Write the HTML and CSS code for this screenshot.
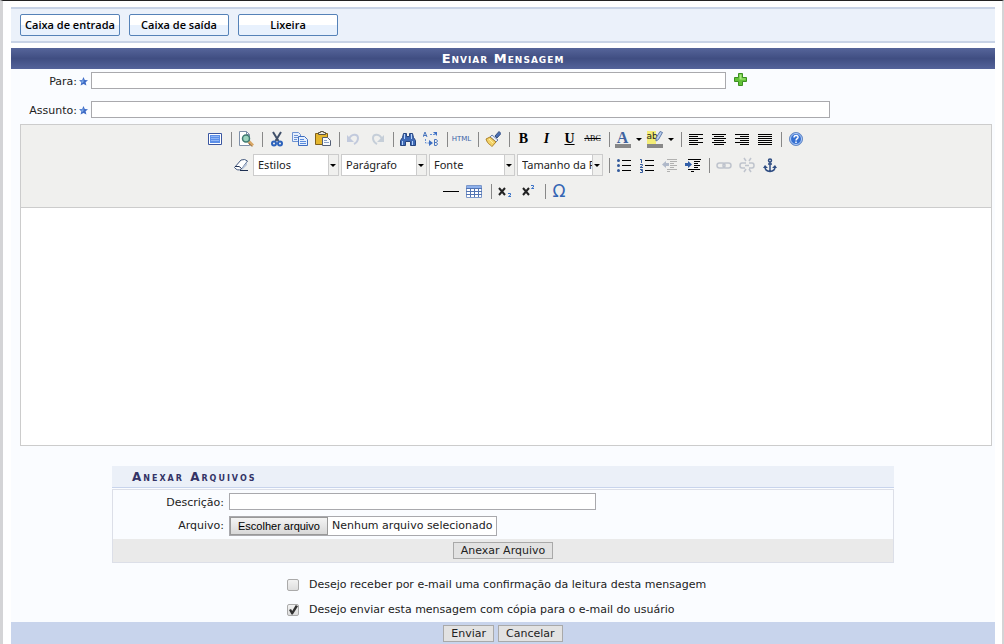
FILE: index.html
```html
<!DOCTYPE html>
<html lang="pt-BR">
<head>
<meta charset="utf-8">
<meta name="viewport" content="width=device-width, initial-scale=1">
<title>Enviar Mensagem</title>
<link rel="stylesheet" href="styles.css">
</head>
<body>
<main class="page">
  <nav class="mailbar">
    <button type="button" class="mailbar-btn">Caixa de entrada</button>
    <button type="button" class="mailbar-btn">Caixa de saída</button>
    <button type="button" class="mailbar-btn">Lixeira</button>
  </nav>

  <form class="message">
    <h1 class="caption">Enviar Mensagem</h1>
    <div class="body">
      <div class="row">
        <label class="label" for="para">Para:</label>
        <svg class="star" viewBox="0 0 9 9"><path fill="#3f6cc6" d="M4.500 0l1.300 3 3.200.2-2.400 2.100.8 3.300-2.900-1.600-2.900 1.600.8-3.300L0 3.200 3.200 3z"/><path fill="#7dabea" d="M4.500 2v3L2.500 6.500 3 5 1.500 3.700l2-.2z"/></svg>
        <div class="fieldarea">
          <input class="text para" id="para" type="text">
          <button type="button" class="add" aria-label="Adicionar"><svg width="13" height="13" viewBox="0 0 13 13"><path d="M4.500.500h4v4h4v4h-4v4h-4v-4h-4v-4h4z" fill="#63c238" stroke="#3c8f22"/><path d="M5.500 1.500h2v4h4v1h-6v-1h-4h4z" fill="#a9ea80"/></svg></button>
        </div>
      </div>
      <div class="row">
        <label class="label" for="assunto">Assunto:</label>
        <svg class="star" viewBox="0 0 9 9"><path fill="#3f6cc6" d="M4.500 0l1.300 3 3.200.2-2.400 2.100.8 3.300-2.900-1.600-2.900 1.600.8-3.300L0 3.200 3.200 3z"/><path fill="#7dabea" d="M4.500 2v3L2.500 6.500 3 5 1.500 3.700l2-.2z"/></svg>
        <div class="fieldarea"><input class="text assunto" id="assunto" type="text"></div>
      </div>

      <div class="editor">
        <div class="tools">
          <div class="toolrow">
            <button type="button" class="tool" aria-label="Tela cheia"><svg viewBox="0 0 16 16"><path fill="#fff" stroke="#3a56a0" d="M1.500 2.500h13v11h-13z"/><path fill="#5c8fe8" d="M3 4h10v8H3z"/><path stroke="#8fb5f5" d="M4 5.500h8M4 7.500h8M4 9.500h8"/></svg></button>
            <i class="sep"></i>
            <button type="button" class="tool" aria-label="Visualizar"><svg viewBox="0 0 16 16"><path fill="#fff" stroke="#7d8fa8" d="M1.500.500h7l3 3v11h-10z"/><path fill="none" stroke="#7d8fa8" d="M8.500.500v3h3"/><path stroke="#d9a765" stroke-width="3" d="M11 10.500l4 4"/><path stroke="#79542a" d="M10 11.500l4 4"/><circle cx="8" cy="7.500" r="3.500" fill="#9bd4bd" stroke="#3f7970" stroke-width="1.500"/></svg></button>
            <i class="sep"></i>
            <button type="button" class="tool" aria-label="Recortar"><svg viewBox="0 0 16 16"><path fill="none" stroke="#40506a" stroke-width="2" d="M4 1l5.500 9M12 1L6.500 10"/><circle cx="5" cy="12.500" r="2" fill="none" stroke="#2c62bc" stroke-width="2"/><circle cx="11" cy="12.500" r="2" fill="none" stroke="#2c62bc" stroke-width="2"/></svg></button>
            <button type="button" class="tool" aria-label="Copiar"><svg viewBox="0 0 16 16"><path fill="#e5effd" stroke="#6d92d2" d="M.500 1.500h6l2 2v7h-8z"/><path stroke="#6d92d2" d="M2 4.500h4M2 6.500h4M2 8.500h3"/><path fill="#e5effd" stroke="#3d6dc0" d="M6.500 5.500h6l3 3v6h-9z"/><path stroke="#5a8bdc" d="M8 8.500h4M8 10.500h6M8 12.500h6"/></svg></button>
            <button type="button" class="tool" aria-label="Colar"><svg viewBox="0 0 16 16"><path fill="#e4b62e" stroke="#80601a" d="M.500 2.500h12v11H.500z"/><path fill="#e8e6df" stroke="#59523f" d="M3.500 3.500v-2h2v-1h3v1h2v2z"/><path fill="#f7fbff" stroke="#545f75" d="M7.500 6.500h5l3 3v5h-8z"/><path stroke="#899fc5" d="M9 9.500h3M9 11.500h5"/></svg></button>
            <i class="sep"></i>
            <button type="button" class="tool off" aria-label="Desfazer"><svg viewBox="0 0 16 16"><path fill="none" stroke="#a5b2d2" stroke-width="2" d="M3 8c2-5 9-6 9-1 0 3-2 5-4 6"/><path fill="#a5b2d2" d="M1 4v7h7z"/></svg></button>
            <button type="button" class="tool off" aria-label="Refazer"><svg viewBox="0 0 16 16"><path fill="none" stroke="#a9b8cb" stroke-width="2" d="M13 8c-2-5-9-6-9-1 0 3 2 5 4 6"/><path fill="#a9b8cb" d="M15 4v7H8z"/></svg></button>
            <i class="sep"></i>
            <button type="button" class="tool" aria-label="Localizar"><svg viewBox="0 0 16 16"><path fill="#3f69b5" stroke="#27457f" d="M3.500 2.500h3v3h3v-3h3l1 4 2 3v5h-5v-4h-5v4h-5v-5l2-3z"/><path stroke="#b5d2fa" d="M4.500 3v5M11.500 3v5M2.500 10v4M12.500 10v4"/></svg></button>
            <button type="button" class="tool" aria-label="Substituir"><svg viewBox="0 0 16 16"><path fill="none" stroke="#4975bd" d="M0 6l2-5 2 5M1 4.500h3M11.500 8.500v6h2q2-1.500 0-3h-2m0-3h2q2 1.500 0 3"/><path fill="none" stroke="#6893d6" stroke-dasharray="2 1" d="M7 3.500h5M2.500 8v4h5"/><path fill="#3c6fc4" d="M10 1h4v4zM6 9l4 3-4 3z"/></svg></button>
            <i class="sep"></i>
            <button type="button" class="tool html" aria-label="Editar HTML">HTML</button>
            <i class="sep"></i>
            <button type="button" class="tool" aria-label="Limpar código"><svg viewBox="0 0 16 16"><path fill="#4a70b4" stroke="#354e80" d="M10 5l4-4.500 2 2L12 7z"/><path fill="#e8edf7" stroke="#6780ae" d="M7 4l6 5-2 2-6-5z"/><path fill="#f3d36a" stroke="#ae8126" d="M5 6l6 5-4 4.500C5 13 3 14 1 8z"/><path stroke="#fff0a6" d="M4 8l4 4"/></svg></button>
            <i class="sep"></i>
            <button type="button" class="tool glyph" aria-label="Negrito"><b>B</b></button>
            <button type="button" class="tool glyph" aria-label="Itálico"><em>I</em></button>
            <button type="button" class="tool glyph" aria-label="Sublinhado"><u>U</u></button>
            <button type="button" class="tool strike" aria-label="Riscado"><s>ABC</s></button>
            <i class="sep"></i>
            <button type="button" class="tool color" aria-label="Cor do texto"><span class="swatch letter">A</span><span class="caret"></span></button>
            <button type="button" class="tool color" aria-label="Cor de fundo"><span class="swatch marker">ab<svg class="pen" viewBox="0 0 8 11"><path fill="#b9cdec" stroke="#5f7aa8" d="M5 .500l2.500 1-4 7L1 10V7z"/></svg></span><span class="caret"></span></button>
            <i class="sep"></i>
            <button type="button" class="tool" aria-label="Alinhar à esquerda"><svg viewBox="0 0 16 16"><path stroke="#000" d="M1 3.500h14M1 5.500h9M1 7.500h14M1 9.500h9M1 11.500h14M1 13.500h9"/></svg></button>
            <button type="button" class="tool" aria-label="Centralizar"><svg viewBox="0 0 16 16"><path stroke="#000" d="M1 3.500h14M3 5.500h10M1 7.500h14M3 9.500h10M1 11.500h14M3 13.500h10"/></svg></button>
            <button type="button" class="tool" aria-label="Alinhar à direita"><svg viewBox="0 0 16 16"><path stroke="#000" d="M1 3.500h14M6 5.500h9M1 7.500h14M6 9.500h9M1 11.500h14M6 13.500h9"/></svg></button>
            <button type="button" class="tool" aria-label="Justificar"><svg viewBox="0 0 16 16"><path stroke="#000" d="M1 3.500h14M1 5.500h14M1 7.500h14M1 9.500h14M1 11.500h14M1 13.500h14"/></svg></button>
            <i class="sep"></i>
            <button type="button" class="tool" aria-label="Ajuda"><svg viewBox="0 0 16 16"><circle cx="8" cy="8" r="6.500" fill="#3570d2" stroke="#6a8cc4"/><circle cx="8" cy="8" r="5.500" fill="none" stroke="#b7d0f6"/><path fill="none" stroke="#fff" stroke-width="1.500" d="M6 6.500c0-3 4.500-2.500 4 0-.3 1.200-2 1.200-2 3M8 10.500v1.500"/></svg></button>
          </div>
          <div class="toolrow">
            <button type="button" class="tool" aria-label="Remover formatação"><svg viewBox="0 0 16 16"><path fill="#fff" stroke="#44597e" d="M1.500 10.500L8 3q4-1.500 6.500 1L8.500 12q-4 2.500-7-1.500z"/><path fill="#b8c5da" d="M9 11l5-6v3l-5 5z"/><path fill="none" stroke="#1d2f51" d="M7 13.500h8M2 9.500q5-1 6.500 2"/></svg></button>
            <span class="combo"><select aria-label="Estilos"><option>Estilos</option></select></span>
            <span class="combo"><select aria-label="Parágrafo"><option>Parágrafo</option></select></span>
            <span class="combo"><select aria-label="Fonte"><option>Fonte</option></select></span>
            <span class="combo"><select aria-label="Tamanho da Fonte"><option>Tamanho da Fonte</option></select></span>
            <i class="sep"></i>
            <button type="button" class="tool" aria-label="Lista"><svg viewBox="0 0 16 16"><path stroke="#000" d="M6 3.500h9M6 8.500h9M6 13.500h9"/><g fill="#335a9c"><circle cx="2.500" cy="3.500" r="1.500"/><circle cx="2.500" cy="8.500" r="1.500"/><circle cx="2.500" cy="13.500" r="1.500"/></g></svg></button>
            <button type="button" class="tool" aria-label="Lista numerada"><svg viewBox="0 0 16 16"><path stroke="#000" d="M6 3.500h9M6 8.500h9M6 13.500h9"/><path fill="none" stroke="#335a9c" d="M1 2.500h1.500V6M1 7.500h2.500v1L1 10.500h3M1 12.500h2.500v1H2h1.500v2H1"/></svg></button>
            <button type="button" class="tool off" aria-label="Diminuir recuo"><svg viewBox="0 0 16 16"><path stroke="#888" d="M5 2.500h10M8 4.500h7M8 6.500h4M8 8.500h7M8 10.500h4M5 12.500h10M5 14.500h3"/><path fill="#8795b2" d="M0 7.500L4 4v2h3v3H4v2z"/></svg></button>
            <button type="button" class="tool" aria-label="Aumentar recuo"><svg viewBox="0 0 16 16"><path stroke="#000" d="M3 2.500h13M9 4.500h6M9 6.500h4M9 8.500h6M9 10.500h4M3 12.500h12M6 14.500h3"/><path fill="#315fa9" d="M7 7.500L3 4v2H0v3h3v2z"/></svg></button>
            <i class="sep"></i>
            <button type="button" class="tool off" aria-label="Inserir link"><svg viewBox="0 0 16 16"><g fill="none" stroke="#a0a8b8" stroke-width="1.500"><rect x="1" y="6" width="8" height="5" rx="2.500"/><rect x="7" y="6" width="8" height="5" rx="2.500"/></g></svg></button>
            <button type="button" class="tool off" aria-label="Remover link"><svg viewBox="0 0 16 16"><g fill="none" stroke="#a0a8b8" stroke-width="1.500"><path d="M7 6H3Q1 6 1 8.500T3 11h3M10 6h3q2 0 2 2.500T13 11h-3M5 1l2 3M12 1l-2 3M5 15l2-3M12 15l-2-3M6 8.500h4"/></g></svg></button>
            <button type="button" class="tool" aria-label="Âncora"><svg viewBox="0 0 16 16"><g fill="none" stroke="#304e83" stroke-width="1.500"><circle cx="8" cy="3.500" r="1.500"/><path d="M8 5v9M6 7h4M3 10q0 4 5 4.500Q13 14 13 10"/></g><path fill="#304e83" d="M1 11l2-3 3 3zM10 11l3-3 2 3z"/></svg></button>
          </div>
          <div class="toolrow">
            <button type="button" class="tool" aria-label="Linha horizontal"><svg viewBox="0 0 16 16"><path stroke="#000" d="M0 8.500h16"/></svg></button>
            <button type="button" class="tool" aria-label="Tabela"><svg viewBox="0 0 16 16"><path fill="#fff" stroke="#7c98ca" d="M.500 2.500h15v12H.500z"/><path fill="#8eb1ec" d="M1 3h14v2H1z"/><path stroke="#5274b2" d="M0 5.500h16M0 8.500h16M0 11.500h16M4.500 5v9M8.500 5v9M12.500 5v9"/></svg></button>
            <i class="sep"></i>
            <button type="button" class="tool" aria-label="Subscrito"><svg viewBox="0 0 16 16"><path stroke="#222" stroke-width="2" d="M2 5l6 7M8 5l-6 7"/><path fill="none" stroke="#3971c6" d="M11 10.500h2.500v1.500L11.500 13.500H14"/></svg></button>
            <button type="button" class="tool" aria-label="Sobrescrito"><svg viewBox="0 0 16 16"><path stroke="#222" stroke-width="2" d="M3 5l6 7M9 5l-6 7"/><path fill="none" stroke="#3971c6" d="M11 2.500h2.500v1.500L11.500 5.500H14"/></svg></button>
            <i class="sep"></i>
            <button type="button" class="tool omega" aria-label="Caractere especial">Ω</button>
          </div>
        </div>
        <textarea class="canvas" aria-label="Mensagem"></textarea>
      </div>

      <section class="attach">
        <h2 class="attach-title">Anexar Arquivos</h2>
        <div class="attach-body">
          <div class="attach-row">
            <label class="attach-label" for="descricao">Descrição:</label>
            <input class="text descricao" id="descricao" type="text">
          </div>
          <div class="attach-row">
            <label class="attach-label" for="arquivo">Arquivo:</label>
            <label class="file"><input class="file-input" id="arquivo" type="file"><span class="file-btn">Escolher arquivo</span><span class="file-name">Nenhum arquivo selecionado</span></label>
          </div>
          <div class="attach-foot"><button type="button" class="btn">Anexar Arquivo</button></div>
        </div>
      </section>

      <div class="options">
        <label class="option"><input type="checkbox" class="check">Desejo receber por e-mail uma confirmação da leitura desta mensagem</label>
        <label class="option"><input type="checkbox" class="check" checked>Desejo enviar esta mensagem com cópia para o e-mail do usuário</label>
      </div>
    </div>
    <div class="actions">
      <button type="submit" class="btn">Enviar</button>
      <button type="button" class="btn">Cancelar</button>
    </div>
  </form>
</main>
</body>
</html>
```
FILE: styles.css
```css
* { box-sizing: border-box; }
html { background: #fff; overflow: hidden; }
body {
  margin: 0;
  color: #222;
  font: 11px/14px Verdana, "DejaVu Sans", sans-serif;
}
button, input, select, textarea { font: inherit; color: inherit; margin: 0; }
.page {
  min-height: 100vh;
  padding: 6px 7px 0 8px;
  border: solid #d4d4d6;
  border-width: 1px 2px 0 3px;
  border-top-color: #222;
}
.mailbar {
  display: flex;
  gap: 9px;
  padding: 5px 9px;
  background: #ebf1fa;
  border: solid #c8d3e6;
  border-width: 2px 0;
}
.mailbar-btn {
  width: 100px;
  height: 22px;
  padding: 0;
  border: 1px solid #5582b8;
  border-radius: 2px;
  background: linear-gradient(#fff 50%, #e8f1fd 50%);
  color: #000;
  font: 600 11px/14px "Open Sans", "Noto Sans", sans-serif;
}
.message { margin-top: 5px; }
.caption {
  margin: 0;
  padding-top: 1px;
  height: 21px;
  background: linear-gradient(#56659a, #404e82 50%, #54639a);
  color: #fff;
  font-size: 13px;
  line-height: 20px;
  letter-spacing: 1px;
  font-variant: small-caps;
  text-align: center;
}
.body { padding: 3px 3px 5px 9px; background: #fafcff; }
.row { display: flex; height: 29px; align-items: flex-start; }
.label { width: 57px; line-height: 20px; text-align: right; }
.star { width: 9px; height: 9px; margin: 5px 3px 0 2px; }
.fieldarea { display: flex; flex: 1; gap: 8px; }
.text {
  height: 17px;
  padding: 0 2px;
  border: 1px solid #a9a9ad;
  background: #fff;
}
.para { width: 70.5%; }
.assunto { width: 82%; }
.add { display: flex; height: 15px; padding: 1px 0; border: 0; background: none; }
.editor { margin-top: -6px; border: 1px solid #ccc; }
.tools {
  display: flex;
  flex-direction: column;
  gap: 4px;
  padding: 3px 0 5px;
  background: #f0f0ee;
  border-bottom: 1px solid #ccc;
}
.toolrow { display: flex; justify-content: center; align-items: center; height: 22px; }
.tool {
  display: flex;
  flex: none;
  justify-content: center;
  align-items: center;
  width: 23px;
  height: 22px;
  padding: 0 2px 0 0;
  border: 0;
  background: none;
}
.tool svg { flex: none; width: 16px; height: 16px; }
.off { opacity: .6; }
.sep { width: 1px; height: 15px; margin: 0 3px 0 4px; background: #888; }
.html { color: #3b62a8; font: 7px/12px "DejaVu Sans", sans-serif; }
.glyph { color: #000; font: bold 14px/16px "Liberation Serif", serif; }
.strike { color: #000; font: 8px/16px "Liberation Serif", serif; }
.color { width: 32px; gap: 5px; }
.swatch {
  width: 16px;
  height: 17px;
  border-bottom: 4px solid #888;
  color: #3f63a0;
  font: bold 16px/13px "Liberation Serif", serif;
}
.marker {
  display: flex;
  color: #222;
  background: linear-gradient(90deg, #f4ed76 9px, transparent 9px);
  font: 9px/11px "DejaVu Sans", sans-serif;
}
.tool .pen { width: 8px; height: 11px; margin-left: -3px; }
.caret { border: solid transparent; border-width: 3px 3px 0; border-top-color: #000; }
.combo { position: relative; width: 86px; height: 22px; margin-right: 2px; }
.combo::after {
  content: "";
  position: absolute;
  top: 10px;
  right: 3px;
  border: solid transparent;
  border-width: 3px 3px 0;
  border-top-color: #000;
  pointer-events: none;
}
.combo select {
  appearance: none;
  width: 100%;
  height: 22px;
  padding: 0 10px 0 4px;
  border: 1px solid #ccc;
  border-radius: 0;
  background: linear-gradient(270deg, #f0f0ee 9px, #ccc 9px, #ccc 10px, #fff 10px);
  color: #222;
  font: 11px/16px "Noto Sans", "Open Sans", sans-serif;
  text-overflow: clip;
}
.omega { color: #3465b4; font: 17px/16px "DejaVu Sans", sans-serif; }
.canvas {
  display: block;
  width: 100%;
  height: 237px;
  padding: 8px;
  border: 0;
  background: #fff;
  resize: none;
}
.attach { margin: 20px 98px 0 92px; }
.attach-title {
  margin: 0;
  padding: 1px 0 0 20px;
  background: #ebf0f8;
  border-bottom: 1px solid #c8d4ec;
  color: #333366;
  font-size: 12px;
  line-height: 20px;
  letter-spacing: 2px;
  font-variant: small-caps;
}
.attach-body { margin-top: 1px; border: 1px solid #dcdfe8; }
.attach-row { display: flex; height: 23px; padding-top: 3px; gap: 5px; align-items: flex-start; }
.attach-row + .attach-row { height: 26px; }
.attach-label { width: 111px; line-height: 20px; text-align: right; }
.descricao { width: 367px; }
.file { display: flex; height: 20px; border: 1px solid #a9a9ad; background: #fff; line-height: 18px; }
.file-input { position: absolute; width: 1px; height: 1px; opacity: 0; }
.file-btn {
  padding: 0 7px;
  border: 1px solid #999;
  background: linear-gradient(#f4f4f4, #d8d8d8);
  color: #000;
  font: 11px/16px "Liberation Sans", Arial, sans-serif;
}
.file-name { padding: 0 4px; }
.attach-foot { display: flex; justify-content: center; padding: 3px 0; background: #eaeaea; }
.btn {
  height: 17px;
  padding: 0 7px;
  border: 1px solid #a9a9a9;
  background: #e2e2e2;
  line-height: 15px;
}
.options { display: flex; flex-direction: column; gap: 11px; margin: 15px 0 0 267px; }
.option { display: flex; align-items: center; gap: 10px; }
.check {
  appearance: none;
  width: 12px;
  height: 12px;
  border: 1px solid #aaa;
  border-radius: 2px;
  background: linear-gradient(#f2f2f2, #dedede);
}
.check:checked::after {
  content: "";
  display: block;
  height: 10px;
  background: #333;
  clip-path: polygon(10% 50%, 30% 40%, 42% 60%, 78% 0, 100% 12%, 48% 95%, 35% 95%);
}
.actions {
  display: flex;
  justify-content: center;
  gap: 4px;
  padding: 3px 0 10px;
  background: #c8d4ec;
}
```
